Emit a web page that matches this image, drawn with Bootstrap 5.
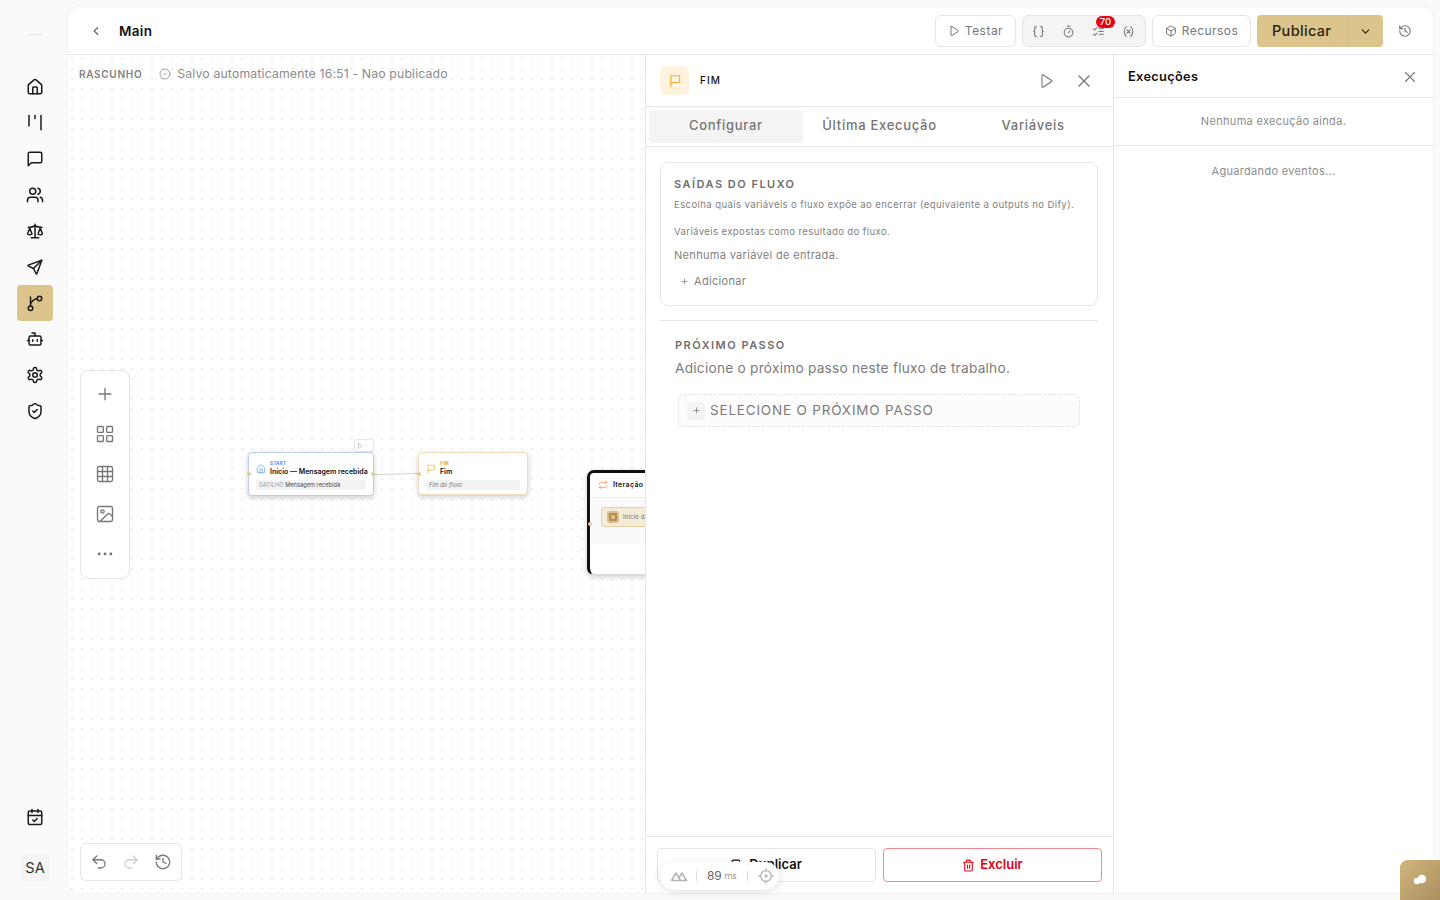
<!DOCTYPE html>
<html lang="pt-BR"><head><meta charset="utf-8"><title>Main</title>
<link rel="stylesheet" href="https://cdn.jsdelivr.net/npm/bootstrap@5.3.0/dist/css/bootstrap.min.css">
<style>
html,body{height:100%;overflow:hidden}
body{background:#fafafa;font-family:Inter,"Liberation Sans",sans-serif;color:#111;letter-spacing:.02em}
svg.ic{fill:none;stroke:currentColor;stroke-width:2;stroke-linecap:round;stroke-linejoin:round;flex:none}
.app-shell{height:100vh;position:relative}
.side-rail{width:68px;flex:none;padding-left:2px}
.rail-logo{height:68px;padding-top:1px;margin-bottom:1px}
.rail-logo span{width:12px;height:1px;background:#e2e2e2}
.rail-btn{width:36px;height:36px;border-radius:4px;color:#1a1a1a}
.rail-btn svg{width:18px;height:18px}
.rail-btn.is-on{background:#dcc48d}
.rail-cal{margin-top:auto;margin-bottom:18px}
.rail-user{width:29px;height:29px;border-radius:6px;background:#f5f5f5;font-size:14.5px;margin-bottom:18px;letter-spacing:0;color:#333}
.main-sheet{margin:7px 7px 7px 0;background:#fff;border-radius:12px;box-shadow:0 0 3px rgba(0,0,0,.07);overflow:hidden;min-width:0}
.top-strip{height:48px;flex:none;border-bottom:1px solid #e5e5e5;padding:1px 11px 0 21px}
.back-i{width:14px;height:14px;color:#666;margin-right:16px}
.top-title{font-size:13.5px;font-weight:600}
.tool-row{gap:6px}
.tool-btn{height:32px;border:1px solid #e5e5e5;border-radius:6px;background:#fff;color:#777;font-size:12px;gap:5px;padding:0;letter-spacing:.04em}
.tool-btn svg{width:12px;height:12px}
.w-testar{width:81px}.w-recursos{width:99px}
.tool-set{height:32px;width:124px;border:1px solid #e5e5e5;border-radius:6px;background:#f4f4f4;color:#777;position:relative}
.tool-set svg{width:13px;height:13px}
.tool-slot{width:30px}
.count-pill{position:absolute;left:73px;top:0;width:19px;height:12px;border-radius:6px;background:#e60012;color:#fff;font-size:9.5px;line-height:12px;text-align:center;letter-spacing:0;font-weight:500}
.pub-split{height:32px;width:126px;border-radius:4px;background:#dcc48d;color:#2a2412;font-size:14.5px;font-weight:500}
.pub-main{width:91px;padding-left:15px;border-right:1px solid #d6bd85}
.pub-drop{width:35px}
.pub-drop svg{width:13px;height:13px}
.hist-btn{width:14px;height:14px;color:#777;margin-left:9px;margin-right:10px}
.work-row{min-height:0}
.flow-canvas{position:relative;overflow:hidden;background-color:#fff;background-image:radial-gradient(circle,#e3e3e3 .6px,transparent .9px);background-size:10px 10px;background-position:-1px -1px;min-width:0;flex:1 1 0}
.draft-line{position:absolute;left:11px;top:10px;gap:17px}
.draft-tag{font-size:10px;font-weight:600;letter-spacing:.07em;color:#808080}
.draft-note{font-size:12.3px;color:#8c8c8c;gap:6px;letter-spacing:.011em;white-space:nowrap}
.draft-note svg{width:12px;height:12px;stroke-width:1.6}
.left-tools{position:absolute;left:12px;top:315px;width:50px;height:209px;background:#fff;border:1px solid #e5e5e5;border-radius:8px;padding-top:3px;color:#777}
.left-tools span{height:40px}
.left-tools svg{width:20px;height:20px;stroke-width:1.6}
.undo-tools{position:absolute;left:12px;top:788px;width:102px;height:38px;background:#fff;border:1px solid #e5e5e5;border-radius:6px;color:#777;padding:0 2px}
.undo-tools svg{width:18px;height:18px;stroke-width:1.7}
.undo-tools span{width:32px}
.undo-tools .off{color:#ccc}
.flow-node{position:absolute;background:#fff;border-radius:4px;box-shadow:0 2px 5px rgba(0,0,0,.2);font-size:7px}
.node-start{left:180px;top:397px;width:126px;height:44px;border:1px solid #bdcfe8;padding:8px 7px 0 7px}
.node-end{left:350px;top:397px;width:110px;height:43px;border:1px solid #ecdcb9;padding:8px 7px 0 7px}
.node-iter{left:519px;top:415px;width:170px;height:105px;border:1px solid #ddd;border-top:3px solid #111;border-left:3px solid #111;border-radius:7px}
.node-kind{font-size:4.5px;font-weight:700;letter-spacing:.06em;line-height:6px}
.kind-blue{color:#4d90f0}.kind-amber{color:#f5a524}
.node-name{font-size:7px;font-weight:600;line-height:10px;letter-spacing:0;white-space:nowrap}
.node-ico{width:10px;height:10px;stroke-width:1.6!important}
.iter-ico{color:#ee8a4a}
.node-sub{height:10px;border-radius:2px;background:#f3f3f3;font-size:5.6px;color:#444;padding:0 3px;white-space:nowrap;margin-top:3px;line-height:10px;letter-spacing:.01em}
.node-sub i{color:#777;font-size:5.6px}
.node-sub em{color:#999;font-style:normal}
.iter-head{height:25px;padding-left:8px;gap:5px;font-size:7px;font-weight:600;border-bottom:1px solid #f2ece0}
.iter-body{background:#fafafa;height:46px;padding:9px 0 0 11px}
.iter-child{width:150px;height:20px;background:#f5ecd8;border:1px solid #e2d1a8;border-radius:3px;padding-left:5px;gap:4px;font-size:5.6px;color:#666}
.iter-child b{width:12px;height:12px;border-radius:3px;background:#d3bf92;display:block;border:2.5px solid #d3bf92;box-shadow:inset 0 0 0 2px #c0894a}
.node-dot{position:absolute;width:4px;height:4px;border-radius:50%;background:#e3cb93}
.mini-bar{position:absolute;left:286px;top:384px;width:20px;height:13px;background:#fff;border:1px solid #e8e8e8;border-radius:3px;box-shadow:0 1px 2px rgba(0,0,0,.08);color:#aaa;gap:2px}
.mini-bar svg{width:6px;height:6px}
.mini-bar u{text-decoration:none;font-size:5px;line-height:5px}
.wire{position:absolute;left:0;top:0;width:100%;height:100%;pointer-events:none}
.node-panel{width:469px;flex:none;border-left:1px solid #e5e5e5;border-right:1px solid #e5e5e5}
.pan-head{height:52px;flex:none;border-bottom:1px solid #e5e5e5;padding:0 19px 0 14px}
.pan-flag{width:29px;height:29px;border-radius:6px;background:#fff2de;color:#f5a524;margin-right:11px}
.pan-flag svg{width:14px;height:14px;stroke-width:1.7}
.pan-name{font-size:10px;font-weight:500;letter-spacing:.11em}
.pan-play{color:#777;width:16px;height:16px;stroke-width:1.6!important;margin-right:20px}
.pan-x{color:#777;width:20px;height:20px;stroke-width:1.6!important}
.tab-strip{height:40px;flex:none;border-bottom:1px solid #e5e5e5;padding:3px}
.tab-cell{flex:1;border-radius:4px;font-size:13px;font-weight:500;color:#757575;letter-spacing:.055em;padding-bottom:2px}
.tab-cell.is-on{background:#f4f4f4}
.pan-scroll{padding:15px 15px 0 14px;min-height:0}
.out-box{height:144px;border:1px solid #e5e5e5;border-radius:8px;padding:13px 13px 0 13px}
.cap-title{font-size:11px;font-weight:600;letter-spacing:.135em;color:#6f6f6f;line-height:16px}
.cap-desc{font-size:9.6px;color:#7f7f7f;line-height:14px;margin:6px 0 0;letter-spacing:.039em;white-space:nowrap}
.cap-desc.second{margin-top:13px}
.cap-none{font-size:11px;color:#7f7f7f;line-height:16px;margin:8px 0 0}
.cap-add{font-size:11px;color:#7f7f7f;margin:10px 0 0 6px;gap:5px;line-height:16px}
.cap-add svg{width:9px;height:9px;stroke-width:2}
.pan-rule{border-top:1px solid #e5e5e5;margin:14px 0 16px}
.next-wrap{padding-left:15px}
.next-desc{font-size:13.7px;color:#7b7b7b;margin:5px 0 0;line-height:20px;letter-spacing:.017em;white-space:nowrap}
.next-pick{width:402px;height:33px;margin:16px 0 0 3px;border:1px dashed #e3e3e3;border-radius:6px;background:#fcfcfc;padding-left:8px;color:#7b7b7b;font-size:13.5px;gap:5px;letter-spacing:.06em}
.next-plus{width:18px;height:18px;background:#f4f4f4;border-radius:4px}
.next-plus svg{width:9px;height:9px}
.pan-foot{height:57px;flex:none;border-top:1px solid #e5e5e5;padding:11px 11px 0 11px;gap:7px}
.foot-btn{flex:1;height:34px;border-radius:4px;font-size:13px;font-weight:600;gap:5px;padding:0;background:#fff}
.foot-btn svg{width:13px;height:13px}
.foot-dup{border:1px solid #e5e5e5;color:#111}
.foot-del{border:1px solid #f08a92;color:#e60012}
.run-side{width:319px;flex:none;min-width:0}
.run-head{height:43px;flex:none;border-bottom:1px solid #e5e5e5;padding:1px 14px 0 14px;font-size:12.8px;font-weight:600}
.run-head svg{width:18px;height:18px;color:#777;stroke-width:1.5}
.run-empty{height:48px;flex:none;border-bottom:1px solid #e5e5e5;font-size:11px;color:#8c8c8c}
.run-wait{height:51px;font-size:11px;color:#8c8c8c}
.perf-pill{position:absolute;left:660px;top:862px;width:119px;height:28px;border-radius:14px;background:#fff;box-shadow:0 2px 8px rgba(0,0,0,.12);color:#666;font-size:12px;padding:0 5px 0 10px;letter-spacing:-.02em}
.perf-pill svg{color:#b5b5b5}
.perf-sep{width:1px;height:10px;background:#ddd;margin:0 10px;flex:none}
.perf-sep.near{margin-left:8px}
.perf-ms{font-size:9px;color:#999;margin-left:3px}
.corner-chat{position:absolute;right:0;bottom:0;width:40px;height:40px;border-radius:8px 0 0 0;background:linear-gradient(135deg,#d0b57c,#ab905f)}
.corner-chat svg{width:16px;height:12px}
</style></head>
<body>
<svg width="0" height="0" class="position-absolute"><defs>
<symbol id="i-play" viewBox="0 0 24 24"><path d="M6 3.500v17a1 1 0 0 0 1.500.8l13-8.500a1 1 0 0 0 0-1.600l-13-8.500A1 1 0 0 0 6 3.500z"/></symbol>
<symbol id="i-x" viewBox="0 0 24 24"><path d="M18 6 6 18M6 6l12 12"/></symbol>
<symbol id="i-down" viewBox="0 0 24 24"><path d="m6 9 6 6 6-6"/></symbol>
<symbol id="i-plus" viewBox="0 0 24 24"><path d="M5 12h14M12 5v14"/></symbol>
<symbol id="i-hist" viewBox="0 0 24 24"><path d="M3 12a9 9 0 1 0 9-9 9.700 9.700 0 0 0-6.700 2.700L3 8"/><path d="M3 3v5h5M12 7v5l4 2"/></symbol>
<symbol id="i-flag" viewBox="0 0 24 24"><path d="M5 22V3h15v11c-5 2-9-1-15 1.500"/></symbol>
<symbol id="i-home" viewBox="0 0 24 24"><path d="M3 10a2 2 0 0 1 .7-1.500l7-6a2 2 0 0 1 2.600 0l7 6A2 2 0 0 1 21 10v9a2 2 0 0 1-2 2H5a2 2 0 0 1-2-2z"/><path d="M15 21v-8a1 1 0 0 0-1-1h-4a1 1 0 0 0-1 1v8"/></symbol>
</defs></svg>
<div class="app-shell d-flex">
<nav class="side-rail d-flex flex-column align-items-center">
  <div class="rail-logo d-flex align-items-center justify-content-center w-100"><span></span></div>
  <a class="rail-btn d-flex align-items-center justify-content-center"><svg class="ic"><use href="#i-home"/></svg></a>
  <a class="rail-btn d-flex align-items-center justify-content-center"><svg class="ic" viewBox="0 0 24 24"><path d="M4 2v14M12 2v4M20 2v19"/></svg></a>
  <a class="rail-btn d-flex align-items-center justify-content-center"><svg class="ic" viewBox="0 0 24 24"><path d="M21 15a2 2 0 0 1-2 2H7l-4 4V5a2 2 0 0 1 2-2h14a2 2 0 0 1 2 2z"/></svg></a>
  <a class="rail-btn d-flex align-items-center justify-content-center"><svg class="ic" viewBox="0 0 24 24"><path d="M16 21v-2a4 4 0 0 0-4-4H6a4 4 0 0 0-4 4v2"/><circle cx="9" cy="7" r="4"/><path d="M22 21v-2a4 4 0 0 0-3-3.870M16 3.130a4 4 0 0 1 0 7.750"/></svg></a>
  <a class="rail-btn d-flex align-items-center justify-content-center"><svg class="ic" viewBox="0 0 24 24"><path d="m16 16 3-8 3 8c-.87.65-1.920 1-3 1s-2.130-.35-3-1Z"/><path d="m2 16 3-8 3 8c-.87.65-1.920 1-3 1s-2.130-.35-3-1Z"/><path d="M7 21h10M12 3v18M3 7h2c2 0 5-1 7-2 2 1 5 2 7 2h2"/></svg></a>
  <a class="rail-btn d-flex align-items-center justify-content-center"><svg class="ic" viewBox="0 0 24 24"><path d="M10 14 21 3"/><path d="M21 3l-6.500 18a.55.55 0 0 1-1 0L10 14l-7-3.500a.55.55 0 0 1 0-1z"/></svg></a>
  <a class="rail-btn is-on d-flex align-items-center justify-content-center"><svg class="ic" viewBox="0 0 24 24"><circle cx="6" cy="19" r="3"/><circle cx="18" cy="6" r="3"/><path d="M6 16V4M6 14c1-4 5-7 9-8"/></svg></a>
  <a class="rail-btn d-flex align-items-center justify-content-center"><svg class="ic" viewBox="0 0 24 24"><path d="M12 8V4H8"/><rect x="4" y="8" width="16" height="12" rx="2"/><path d="M2 14h2M20 14h2M15 13v2M9 13v2"/></svg></a>
  <a class="rail-btn d-flex align-items-center justify-content-center"><svg class="ic" viewBox="0 0 24 24"><path d="M12.220 2h-.44a2 2 0 0 0-2 2v.18a2 2 0 0 1-1 1.730l-.43.25a2 2 0 0 1-2 0l-.15-.08a2 2 0 0 0-2.730.73l-.22.38a2 2 0 0 0 .73 2.730l.15.1a2 2 0 0 1 1 1.720v.51a2 2 0 0 1-1 1.740l-.15.09a2 2 0 0 0-.73 2.730l.22.38a2 2 0 0 0 2.730.73l.15-.08a2 2 0 0 1 2 0l.43.25a2 2 0 0 1 1 1.730V20a2 2 0 0 0 2 2h.44a2 2 0 0 0 2-2v-.18a2 2 0 0 1 1-1.730l.43-.25a2 2 0 0 1 2 0l.15.08a2 2 0 0 0 2.730-.73l.22-.39a2 2 0 0 0-.73-2.730l-.15-.08a2 2 0 0 1-1-1.740v-.5a2 2 0 0 1 1-1.740l.15-.09a2 2 0 0 0 .73-2.730l-.22-.38a2 2 0 0 0-2.730-.73l-.15.08a2 2 0 0 1-2 0l-.43-.25a2 2 0 0 1-1-1.730V4a2 2 0 0 0-2-2z"/><circle cx="12" cy="12" r="3"/></svg></a>
  <a class="rail-btn d-flex align-items-center justify-content-center"><svg class="ic" viewBox="0 0 24 24"><path d="M20 13c0 5-3.500 7.500-7.660 8.950a1 1 0 0 1-.67-.01C7.500 20.500 4 18 4 13V6a1 1 0 0 1 1-1c2 0 4.500-1.200 6.240-2.720a1.170 1.170 0 0 1 1.520 0C14.510 3.810 17 5 19 5a1 1 0 0 1 1 1z"/><path d="m9 12 2 2 4-4"/></svg></a>
  <a class="rail-btn rail-cal d-flex align-items-center justify-content-center"><svg class="ic" viewBox="0 0 24 24"><path d="M8 2v4M16 2v4"/><rect x="3" y="4" width="18" height="18" rx="2"/><path d="M3 10h18M9 16l2 2 4-4"/></svg></a>
  <div class="rail-user d-flex align-items-center justify-content-center">SA</div>
</nav>
<main class="main-sheet flex-grow-1 d-flex flex-column">
  <header class="top-strip d-flex align-items-center">
    <svg class="ic back-i" viewBox="0 0 24 24"><path d="m15 18-6-6 6-6"/></svg>
    <span class="top-title">Main</span>
    <div class="tool-row ms-auto d-flex align-items-center">
      <button class="tool-btn w-testar d-flex align-items-center justify-content-center"><svg class="ic"><use href="#i-play"/></svg>Testar</button>
      <div class="tool-set d-flex align-items-center">
        <span class="tool-slot d-flex justify-content-center"><svg class="ic" viewBox="0 0 24 24"><path d="M8 3H7a2 2 0 0 0-2 2v5a2 2 0 0 1-2 2 2 2 0 0 1 2 2v5a2 2 0 0 0 2 2h1M16 21h1a2 2 0 0 0 2-2v-5a2 2 0 0 1 2-2 2 2 0 0 1-2-2V5a2 2 0 0 0-2-2h-1"/></svg></span>
        <span class="tool-slot d-flex justify-content-center"><svg class="ic" viewBox="0 0 24 24"><path d="M10 2h4M12 14l3-3"/><circle cx="12" cy="14" r="8"/></svg></span>
        <span class="tool-slot d-flex justify-content-center"><svg class="ic" viewBox="0 0 24 24"><path d="m3 7 2 2 4-4M3 17l2 2 4-4M13 7h8M13 17h8M13 12h8"/></svg></span>
        <span class="tool-slot d-flex justify-content-center"><svg class="ic" viewBox="0 0 24 24"><path d="M8 21s-4-3-4-9 4-9 4-9M16 3s4 3 4 9-4 9-4 9M15 9l-6 6M9 9l6 6"/></svg></span>
        <span class="count-pill">70</span>
      </div>
      <button class="tool-btn w-recursos d-flex align-items-center justify-content-center"><svg class="ic" viewBox="0 0 24 24"><path d="M21 8a2 2 0 0 0-1-1.730l-7-4a2 2 0 0 0-2 0l-7 4A2 2 0 0 0 3 8v8a2 2 0 0 0 1 1.730l7 4a2 2 0 0 0 2 0l7-4A2 2 0 0 0 21 16Z"/><path d="m3.300 7 8.700 5 8.700-5M12 22V12"/></svg>Recursos</button>
      <div class="pub-split d-flex align-items-stretch">
        <span class="pub-main d-flex align-items-center">Publicar</span>
        <span class="pub-drop d-flex align-items-center justify-content-center"><svg class="ic"><use href="#i-down"/></svg></span>
      </div>
      <svg class="ic hist-btn"><use href="#i-hist"/></svg>
    </div>
  </header>
  <div class="work-row flex-grow-1 d-flex">
    <section class="flow-canvas">
      <div class="draft-line d-flex align-items-center">
        <span class="draft-tag">RASCUNHO</span>
        <span class="draft-note d-flex align-items-center"><svg class="ic" viewBox="0 0 24 24"><circle cx="12" cy="12" r="10"/><path d="m9 12 2 2 4-4"/></svg>Salvo automaticamente 16:51 - Nao publicado</span>
      </div>
      <svg class="wire" viewBox="0 0 577 838"><path d="M306 419.500 350 418.500" stroke="#cfcfcf" stroke-width="1.200" fill="none"/></svg>
      <div class="mini-bar d-flex align-items-center justify-content-center"><svg class="ic"><use href="#i-play"/></svg><u>···</u></div>
      <article class="flow-node node-start">
        <div class="d-flex align-items-center gap-1">
          <svg class="ic node-ico kind-blue"><use href="#i-home"/></svg>
          <div><div class="node-kind kind-blue">START</div><div class="node-name">Início — Mensagem recebida</div></div>
        </div>
        <div class="node-sub"><em>GATILHO</em> Mensagem recebida</div>
        <span class="node-dot position-absolute top-50 start-0 translate-middle"></span>
        <span class="node-dot position-absolute top-50 start-100 translate-middle"></span>
      </article>
      <article class="flow-node node-end">
        <div class="d-flex align-items-center gap-1">
          <svg class="ic node-ico kind-amber"><use href="#i-flag"/></svg>
          <div><div class="node-kind kind-amber">FIM</div><div class="node-name">Fim</div></div>
        </div>
        <div class="node-sub"><i>Fim do fluxo</i></div>
        <span class="node-dot position-absolute top-50 start-0 translate-middle"></span>
      </article>
      <article class="flow-node node-iter">
        <div class="iter-head d-flex align-items-center"><svg class="ic node-ico iter-ico" viewBox="0 0 24 24"><path d="m17 2 4 4-4 4M3 11V9a3 3 0 0 1 3-3h15M7 22l-4-4 4-4M21 13v2a3 3 0 0 1-3 3H3"/></svg>Iteração</div>
        <div class="iter-body"><div class="iter-child d-flex align-items-center"><b></b>Início da iteração</div></div>
        <span class="node-dot position-absolute top-50 start-0 translate-middle"></span>
      </article>
      <div class="left-tools d-flex flex-column">
        <span class="d-flex align-items-center justify-content-center"><svg class="ic"><use href="#i-plus"/></svg></span>
        <span class="d-flex align-items-center justify-content-center"><svg class="ic" viewBox="0 0 24 24"><rect x="3" y="3" width="7" height="7" rx="1"/><rect x="14" y="3" width="7" height="7" rx="1"/><rect x="3" y="14" width="7" height="7" rx="1"/><rect x="14" y="14" width="7" height="7" rx="1"/></svg></span>
        <span class="d-flex align-items-center justify-content-center"><svg class="ic" viewBox="0 0 24 24"><rect x="3" y="3" width="18" height="18" rx="2"/><path d="M3 9h18M3 15h18M9 3v18M15 3v18"/></svg></span>
        <span class="d-flex align-items-center justify-content-center"><svg class="ic" viewBox="0 0 24 24"><rect x="3" y="3" width="18" height="18" rx="2"/><circle cx="9" cy="9" r="2"/><path d="m21 15-3-3a2 2 0 0 0-2.800 0L6 21"/></svg></span>
        <span class="d-flex align-items-center justify-content-center"><svg class="ic" viewBox="0 0 24 24"><path d="M5 12h.01M12 12h.01M19 12h.01" stroke-width="3.500"/></svg></span>
      </div>
      <div class="undo-tools d-flex align-items-center">
        <span class="d-flex justify-content-center"><svg class="ic" viewBox="0 0 24 24"><path d="M9 14 4 9l5-5"/><path d="M4 9h10.500a5.500 5.500 0 0 1 0 11H11"/></svg></span>
        <span class="off d-flex justify-content-center"><svg class="ic" viewBox="0 0 24 24"><path d="m15 14 5-5-5-5"/><path d="M20 9H9.500a5.500 5.500 0 0 0 0 11H13"/></svg></span>
        <span class="d-flex justify-content-center"><svg class="ic"><use href="#i-hist"/></svg></span>
      </div>
    </section>
    <section class="node-panel d-flex flex-column">
      <div class="pan-head d-flex align-items-center">
        <span class="pan-flag d-flex align-items-center justify-content-center"><svg class="ic"><use href="#i-flag"/></svg></span>
        <span class="pan-name">FIM</span>
        <svg class="ic pan-play ms-auto"><use href="#i-play"/></svg>
        <svg class="ic pan-x"><use href="#i-x"/></svg>
      </div>
      <div class="tab-strip d-flex">
        <span class="tab-cell is-on d-flex align-items-center justify-content-center">Configurar</span>
        <span class="tab-cell d-flex align-items-center justify-content-center">Última Execução</span>
        <span class="tab-cell d-flex align-items-center justify-content-center">Variáveis</span>
      </div>
      <div class="pan-scroll flex-grow-1">
        <div class="out-box">
          <div class="cap-title">SAÍDAS DO FLUXO</div>
          <p class="cap-desc">Escolha quais variáveis o fluxo expõe ao encerrar (equivalente a outputs no Dify).</p>
          <p class="cap-desc second">Variáveis expostas como resultado do fluxo.</p>
          <p class="cap-none">Nenhuma variável de entrada.</p>
          <div class="cap-add d-flex align-items-center"><svg class="ic"><use href="#i-plus"/></svg>Adicionar</div>
        </div>
        <div class="pan-rule"></div>
        <div class="next-wrap">
          <div class="cap-title">PRÓXIMO PASSO</div>
          <p class="next-desc">Adicione o próximo passo neste fluxo de trabalho.</p>
          <div class="next-pick d-flex align-items-center"><span class="next-plus d-flex align-items-center justify-content-center"><svg class="ic"><use href="#i-plus"/></svg></span>SELECIONE O PRÓXIMO PASSO</div>
        </div>
      </div>
      <div class="pan-foot d-flex">
        <button class="foot-btn foot-dup d-flex align-items-center justify-content-center"><svg class="ic" viewBox="0 0 24 24"><rect x="8" y="8" width="14" height="14" rx="2"/><path d="M4 16a2 2 0 0 1-2-2V4a2 2 0 0 1 2-2h10a2 2 0 0 1 2 2"/></svg>Duplicar</button>
        <button class="foot-btn foot-del d-flex align-items-center justify-content-center"><svg class="ic" viewBox="0 0 24 24"><path d="M3 6h18M19 6v14a2 2 0 0 1-2 2H7a2 2 0 0 1-2-2V6M8 6V4a2 2 0 0 1 2-2h4a2 2 0 0 1 2 2v2M10 11v6M14 11v6"/></svg>Excluir</button>
      </div>
    </section>
    <aside class="run-side d-flex flex-column">
      <div class="run-head d-flex align-items-center justify-content-between">Execuções<svg class="ic"><use href="#i-x"/></svg></div>
      <div class="run-empty d-flex align-items-center justify-content-center">Nenhuma execução ainda.</div>
      <div class="run-wait d-flex align-items-center justify-content-center">Aguardando eventos...</div>
    </aside>
  </div>
</main>
<div class="perf-pill d-flex align-items-center">
  <svg class="ic" width="18" height="12" viewBox="0 0 24 16" stroke-width="2.500"><path d="M2 14 8 4l6 10H2zM12 10l4-6 6 10h-8"/></svg>
  <span class="perf-sep near"></span><span>89</span><span class="perf-ms">ms</span><span class="perf-sep"></span>
  <svg class="ic" width="16" height="16" viewBox="0 0 24 24"><circle cx="12" cy="12" r="8"/><circle cx="12" cy="12" r="1.500"/><path d="M12 1v3M12 20v3M1 12h3M20 12h3"/></svg>
</div>
<div class="corner-chat d-flex align-items-center justify-content-center"><svg viewBox="0 0 16 12"><circle cx="5" cy="7" r="3.200" fill="#fff"/><circle cx="10" cy="5" r="4.200" fill="#fff"/></svg></div>
</div>
</body></html>
